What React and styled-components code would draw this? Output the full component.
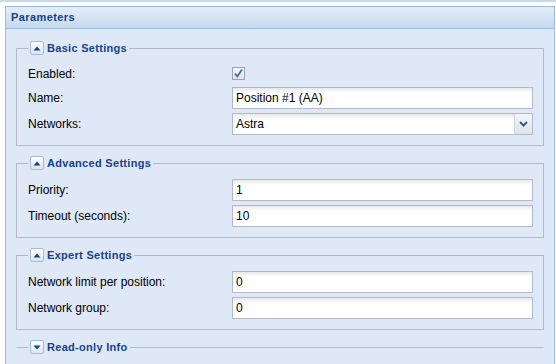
import styled, { createGlobalStyle } from "styled-components";

const GlobalStyle = createGlobalStyle`
  body {
    margin: 0;
    background: #fff;
    font-family: "Liberation Sans", Arial, sans-serif;
    font-size: 12px;
    color: #000;
    overflow: hidden;
  }
`;

const TopStrip = styled.div`
  height: 2px;
  background: #cbd8ea;
`;

const Panel = styled.div`
  margin: 4px 1px 0 5px;
  display: flex;
  flex-direction: column;
  height: 360px;
`;

const Header = styled.div`
  height: 21px;
  box-sizing: content-box;
  border: 1px solid #99bbe8;
  background: linear-gradient(to bottom, #e4edf9 0%, #d7e4f5 45%, #c6d8ef 100%);
  color: #15428b;
  font-weight: bold;
  font-size: 11px;
  letter-spacing: 0.4px;
  line-height: 21px;
  padding-left: 5px;
`;

const Body = styled.div`
  flex: 1;
  background: #dfe8f6;
  border: 1px solid #99bbe8;
  border-top: none;
  padding: 12px 10px 0;
`;

const FieldSet = styled.fieldset`
  margin: 0 0 10px;
  padding: 9px 10px ${(p) => (p.$collapsed ? "0" : "6px")} 11px;
  border: 1px solid #b5b8c8;
  ${(p) =>
    p.$collapsed &&
    `
    border-left-color: transparent;
    border-right-color: transparent;
    border-bottom: none;
  `}
  min-width: 0;
`;

const Legend = styled.legend`
  padding: 0 2px;
  display: flex;
  align-items: center;
  gap: 3px;
  color: #15428b;
  font-weight: bold;
  font-size: 11px;
  letter-spacing: 0.3px;
  height: 14px;
  line-height: 14px;
`;

const Toggle = styled.span`
  width: 14px;
  height: 14px;
  box-sizing: border-box;
  border: 1px solid #a6bcd8;
  border-radius: 2px;
  background: linear-gradient(to bottom, #ffffff, #dae5f3);
  display: flex;
  align-items: center;
  justify-content: center;
`;

const Row = styled.div`
  display: flex;
  align-items: center;
  height: ${(p) => p.$h || 22}px;
  margin-bottom: 4px;
`;

const Label = styled.label`
  width: 204px;
  flex: none;
  color: #000;
`;

const TextInput = styled.input`
  flex: 1;
  min-width: 0;
  height: 22px;
  box-sizing: border-box;
  border: 1px solid #b5b8c8;
  background: linear-gradient(to bottom, #e8e8e8 0, #ffffff 5px);
  padding: 1px 3px;
  font-family: "Liberation Sans", Arial, sans-serif;
  font-size: 12px;
  color: #000;
  outline: none;
`;

const Combo = styled.div`
  flex: 1;
  display: flex;
  height: 22px;
  box-sizing: border-box;
  border: 1px solid #b5b8c8;
  background: linear-gradient(to bottom, #e8e8e8 0, #ffffff 5px);
`;

const ComboText = styled.span`
  flex: 1;
  padding: 0 3px;
  line-height: 20px;
`;

const Trigger = styled.span`
  width: 17px;
  border-left: 1px solid #d0d6de;
  background: linear-gradient(to bottom, #f3f6fa, #dde4ec);
  display: flex;
  align-items: center;
  justify-content: center;
`;

const CheckBox = styled.span`
  width: 13px;
  height: 13px;
  box-sizing: border-box;
  border: 1px solid #9aa3ae;
  background: linear-gradient(to bottom, #f2f4f7, #dfe4ea);
  display: flex;
  align-items: center;
  justify-content: center;
`;

const Arrow = ({ down }) => (
  <svg width="8" height="5" viewBox="0 0 8 5">
    {down ? (
      <path d="M0.5 0.5 L7.5 0.5 L4 4.5 Z" fill="#15428b" />
    ) : (
      <path d="M0.5 4.5 L7.5 4.5 L4 0.5 Z" fill="#15428b" />
    )}
  </svg>
);

const Section = ({ title, collapsed, children }) => (
  <FieldSet $collapsed={collapsed}>
    <Legend>
      <Toggle>
        <Arrow down={collapsed} />
      </Toggle>
      {title}
    </Legend>
    {!collapsed && children}
  </FieldSet>
);

const App = () => {
  return (
    <>
      <GlobalStyle />
      <TopStrip />
      <Panel>
        <Header>Parameters</Header>
        <Body>
          <Section title="Basic Settings">
            <Row $h={19}>
              <Label>Enabled:</Label>
              <CheckBox>
                <svg width="11" height="11" viewBox="0 0 11 11">
                  <path
                    d="M2 5.5 L4.3 8.5 L9 1.5"
                    fill="none"
                    stroke="#4d6b96"
                    strokeWidth="1.8"
                  />
                </svg>
              </CheckBox>
            </Row>
            <Row>
              <Label>Name:</Label>
              <TextInput defaultValue="Position #1 (AA)" readOnly />
            </Row>
            <Row>
              <Label>Networks:</Label>
              <Combo>
                <ComboText>Astra</ComboText>
                <Trigger>
                  <svg width="9" height="6" viewBox="0 0 9 6">
                    <path
                      d="M1 1 L4.5 4.5 L8 1"
                      fill="none"
                      stroke="#3b5a8a"
                      strokeWidth="2"
                    />
                  </svg>
                </Trigger>
              </Combo>
            </Row>
          </Section>
          <Section title="Advanced Settings">
            <Row>
              <Label>Priority:</Label>
              <TextInput defaultValue="1" readOnly />
            </Row>
            <Row>
              <Label>Timeout (seconds):</Label>
              <TextInput defaultValue="10" readOnly />
            </Row>
          </Section>
          <Section title="Expert Settings">
            <Row>
              <Label>Network limit per position:</Label>
              <TextInput defaultValue="0" readOnly />
            </Row>
            <Row>
              <Label>Network group:</Label>
              <TextInput defaultValue="0" readOnly />
            </Row>
          </Section>
          <Section title="Read-only Info" collapsed />
        </Body>
      </Panel>
    </>
  );
};

export default App;
